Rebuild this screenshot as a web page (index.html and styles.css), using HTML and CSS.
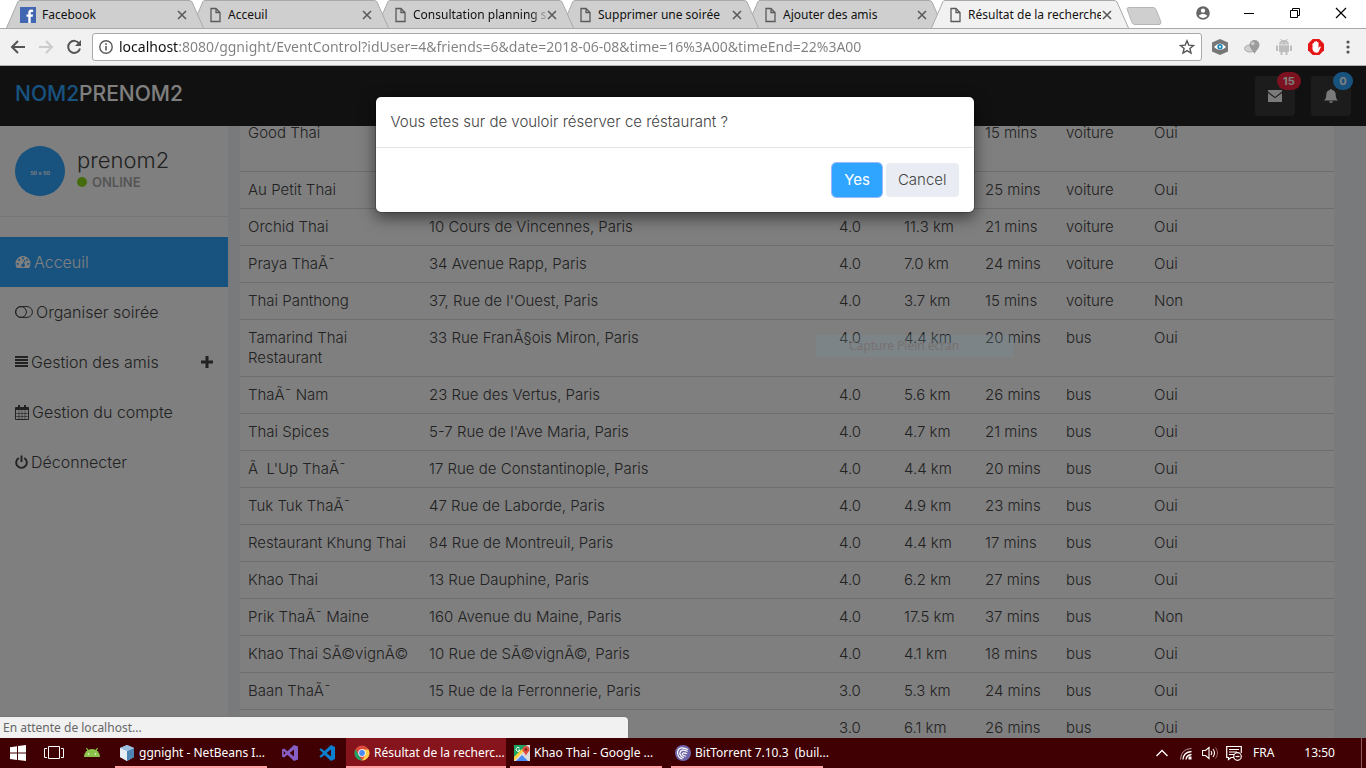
FILE: index.html
```html
<!DOCTYPE html>
<html lang="fr">
<head>
<meta charset="utf-8">
<title>Résultat de la recherche</title>
<link rel="stylesheet" href="styles.css">
</head>
<body>
<svg class="defs" aria-hidden="true">
  <symbol id="page" viewBox="0 0 12 16"><path d="M1.5 1.5h5l4 4v9h-9zM6.500 1.500v4h4" fill="none" stroke="#5a5a5a" stroke-width="1.300"/></symbol>
  <symbol id="cross" viewBox="0 0 10 10"><path d="M1 1l8 8M9 1l-8 8" stroke="#5a5a5a" stroke-width="1.600"/></symbol>
  <symbol id="shape" viewBox="0 0 198 28" preserveAspectRatio="none"><path d="M.5 28L12 1.500Q12.500.5 14 .5H183Q185 .5 186 2L197.500 28" stroke="#a9a9a9"/></symbol>
</svg>

<header class="tabs">
  <div class="tab t1"><svg class="tab-bg"><use href="#shape"/></svg>
    <svg class="fb" viewBox="0 0 16 16"><path fill="#4267b2" d="M0 0h16v16H0z"/><path fill="#fff" d="M8.300 16V9.800H6.500V7.400h1.800V5.800c0-2 1.200-3.200 3.100-3.200l1.700.1v2.200h-1.200c-1 0-1.200.5-1.200 1.200v1.300H13l-.3 2.400h-2V16z"/></svg>
    <span class="tab-title">Facebook</span><button class="tab-close" aria-label="Fermer"><svg><use href="#cross"/></svg></button></div>
  <div class="tab t2"><svg class="tab-bg"><use href="#shape"/></svg><svg class="page"><use href="#page"/></svg>
    <span class="tab-title">Acceuil</span><button class="tab-close" aria-label="Fermer"><svg><use href="#cross"/></svg></button></div>
  <div class="tab t3"><svg class="tab-bg"><use href="#shape"/></svg><svg class="page"><use href="#page"/></svg>
    <span class="tab-title fade">Consultation planning s</span><button class="tab-close" aria-label="Fermer"><svg><use href="#cross"/></svg></button></div>
  <div class="tab t4"><svg class="tab-bg"><use href="#shape"/></svg><svg class="page"><use href="#page"/></svg>
    <span class="tab-title">Supprimer une soirée</span><button class="tab-close" aria-label="Fermer"><svg><use href="#cross"/></svg></button></div>
  <div class="tab t5"><svg class="tab-bg"><use href="#shape"/></svg><svg class="page"><use href="#page"/></svg>
    <span class="tab-title">Ajouter des amis</span><button class="tab-close" aria-label="Fermer"><svg><use href="#cross"/></svg></button></div>
  <div class="tab active"><svg class="tab-bg"><use href="#shape"/></svg><svg class="page"><use href="#page"/></svg>
    <span class="tab-title">Résultat de la recherche</span><button class="tab-close" aria-label="Fermer"><svg><use href="#cross"/></svg></button></div>
  <button class="new-tab" aria-label="Nouvel onglet"><svg viewBox="0 0 36 18"><path d="M1 2Q1 .5 3 .5H27Q29 .5 30 2.500L35 15Q35 17.500 33 17.500H9Q7 17.500 6 15.500Z" fill="#cfcfcf" stroke="#b5b5b5"/></svg></button>
  <div class="window-controls">
    <button aria-label="Profil"><svg viewBox="0 0 14 14"><path fill="#666" fill-rule="evenodd" d="M7 .2a6.800 6.800 0 100 13.600A6.800 6.800 0 007 .2zm0 2.200a2.200 2.200 0 110 4.400 2.200 2.200 0 010-4.400zM2.800 9.700C3.500 8.500 5.500 8 7 8s3.500.5 4.200 1.700C10.300 11 8.700 11.900 7 11.900s-3.300-.9-4.200-2.200z"/></svg></button>
    <button aria-label="Réduire"><svg viewBox="0 0 14 14"><path d="M2 7.500h10" stroke="#000"/></svg></button>
    <button aria-label="Restaurer"><svg viewBox="0 0 14 14"><path d="M2.500 4.500h7v7h-7zM4.500 4.500v-2h7v7h-2" fill="none" stroke="#000"/></svg></button>
    <button aria-label="Fermer"><svg viewBox="0 0 14 14"><path d="M2 2l10 10M12 2L2 12" stroke="#000" stroke-width="1.200"/></svg></button>
  </div>
</header>

<div class="toolbar">
  <button class="nav-btn" aria-label="Précédent"><svg viewBox="0 0 16 16"><path d="M15 8H2.500M8 2L2 8l6 6" fill="none" stroke="#555" stroke-width="2"/></svg></button>
  <button class="nav-btn" aria-label="Suivant"><svg viewBox="0 0 16 16"><path d="M1 8h12.500M8 2l6 6-6 6" fill="none" stroke="#ccc" stroke-width="2"/></svg></button>
  <button class="nav-btn" aria-label="Recharger"><svg viewBox="0 0 16 16"><path d="M13.200 4.500A6 6 0 1014 9.500" fill="none" stroke="#555" stroke-width="2"/><path d="M15 1v6H9z" fill="#555"/></svg></button>
  <div class="address">
    <svg class="info" viewBox="0 0 14 14"><circle cx="7" cy="7" r="6.200" fill="none" stroke="#5a5a5a" stroke-width="1.400"/><path d="M7 6v4.500M7 3.300v1.600" stroke="#5a5a5a" stroke-width="1.600"/></svg>
    <input type="text" aria-label="Adresse" value="localhost:8080/ggnight/EventControl?idUser=4&amp;friends=6&amp;date=2018-06-08&amp;time=16%3A00&amp;timeEnd=22%3A00">
    <button class="star" aria-label="Favori"><svg viewBox="0 0 16 16"><path d="M8 1.800l1.800 4.300 4.700.4-3.600 3 1.100 4.600L8 11.600 4 14.100l1.100-4.600-3.600-3 4.700-.4z" fill="none" stroke="#555" stroke-width="1.400"/></svg></button>
  </div>
  <button class="ext" aria-label="Extension œil"><svg viewBox="0 0 16 16"><path d="M8 0l8 3.500v9L8 16l-8-3.500v-9z" fill="#777"/><path d="M2 8q6-7 12 0-6 6-12 0z" fill="#fff"/><circle cx="8" cy="7.800" r="2.700" fill="#1e88b5"/><circle cx="8" cy="7.800" r="1" fill="#fff"/></svg></button>
  <button class="ext" aria-label="Extension ballon"><svg viewBox="0 0 16 16"><ellipse cx="6" cy="9.500" rx="5.500" ry="3.500" fill="#d0d0d0" stroke="#aaa"/><path d="M10.500 1a5 5 0 015 5c0 3-3 5-5 9C8.500 11 5.500 9 5.500 6a5 5 0 015-5z" fill="#9c9c9c"/><circle cx="8.800" cy="4.500" r="1.800" fill="#ccc"/></svg></button>
  <button class="ext" aria-label="Extension Android"><svg viewBox="0 0 16 16" fill="#bdbdbd"><path d="M3 5.500a5 4.500 0 0110 0zM3 6.300h10V13H3zM0 6.500h2V12H0zM14 6.500h2V12h-2zM4.500 13h2v3h-2zM9.500 13h2v3h-2z"/><path d="M4.500 0l1.500 2M11.500 0L10 2" stroke="#bdbdbd"/><path d="M5.500 3.500h1v1h-1zM9.500 3.500h1v1h-1z" fill="#fff"/></svg></button>
  <button class="ext" aria-label="Bloqueur"><svg viewBox="0 0 16 16"><path d="M4.700 0h6.600L16 4.700v6.600L11.300 16H4.700L0 11.300V4.700z" fill="#e51616"/><path d="M4.500 8V4.500q.8-.8 1.500 0V3q.8-.9 1.500 0v-.6q.8-.9 1.500 0V3.300q.8-.7 1.500.1V9l1.300-1.500q1.200-.3 1 .8L10.500 13q-1.500 1.200-4 .3Q4.500 12 4.500 10z" fill="#fff"/></svg></button>
  <button class="ext" aria-label="Menu"><svg viewBox="0 0 16 16" fill="#555"><circle cx="8" cy="3" r="1.600"/><circle cx="8" cy="8" r="1.600"/><circle cx="8" cy="13" r="1.600"/></svg></button>
</div>

<div class="viewport">
  <nav class="navbar">
    <a class="brand" href="#"><span>NOM2</span>PRENOM2</a>
    <div class="alerts">
      <button class="alert-btn" aria-label="Messages"><svg viewBox="0 0 16 14"><path fill="#f4f4f4" d="M1 1h14v1.500L8 8 1 2.500zM1 4l7 5.200L15 4v9H1z"/></svg><span class="badge red">15</span></button>
      <button class="alert-btn" aria-label="Notifications"><svg viewBox="0 0 16 16"><path fill="#f4f4f4" d="M8 1c.7 0 1 .5 1 1 2.500.5 3.700 2.300 3.700 4.500 0 3.500.8 4.500 2.300 6H1c1.500-1.500 2.300-2.500 2.300-6C3.300 4.300 4.500 2.500 7 2c0-.5.300-1 1-1zM6.200 13.300h3.600a1.800 1.800 0 01-3.600 0z"/></svg><span class="badge blue">0</span></button>
    </div>
  </nav>
  <div class="content">
    <aside class="sidebar">
      <div class="profile">
        <div class="avatar">50 x 50</div>
        <div><div class="user">prenom2</div><div class="status"><i></i>ONLINE</div></div>
      </div>
      <ul class="menu">
        <li><a class="current" href="#"><svg class="w16" viewBox="0 0 16 14"><path fill="currentColor" fill-rule="evenodd" d="M8 1a7.500 7.500 0 017.500 7.500c0 1.600-.5 3-1.200 4.500H1.700C1 11.500.5 10 .5 8.500A7.500 7.500 0 018 1zM7.100 2.300v2h1.800v-2zM3.300 4v1.800h1.800V4zm7.700 0v1.800h1.800V4zM1.800 8v1.800h1.800V8zm10.600 0v1.800h1.800V8zM9.200 4.800L8.100 8.500a1.800 1.800 0 101 .3l1.100-3.700z"/></svg>Acceuil</a></li>
        <li><a href="#"><svg class="w18" viewBox="0 0 18 12"><rect x=".6" y=".6" width="16.800" height="10.800" rx="5.400" fill="none" stroke="currentColor"/><circle cx="6" cy="6" r="5.400" fill="none" stroke="currentColor"/></svg>Organiser soirée</a></li>
        <li><a href="#"><svg class="w13" viewBox="0 0 13 14"><path d="M0 1h13v2H0zM0 4h13v2H0zM0 7h13v2H0zM0 10h13v2H0z" fill="currentColor"/></svg>Gestion des amis<svg class="plus" viewBox="0 0 12 12"><path d="M6 0v12M0 6h12" stroke="currentColor" stroke-width="3"/></svg></a></li>
        <li><a href="#"><svg class="w14" viewBox="0 0 14 15"><path d="M.5 2.500h13v12H.5z" fill="none" stroke="currentColor"/><path d="M.5 8.500h13M.5 11.500h13M4 5.500v9M7 5.500v9M10 5.500v9" fill="none" stroke="currentColor" stroke-width=".6"/><path d="M.5 2.500h13V5H.5zM3 0h2v4H3zM9 0h2v4H9z" fill="currentColor"/></svg>Gestion du compte</a></li>
        <li><a href="#"><svg class="w13" viewBox="0 0 13 14"><path d="M3.800 3A5.300 5.300 0 109.200 3M6.500.5v6.500" fill="none" stroke="currentColor" stroke-width="1.900"/></svg>Déconnecter</a></li>
      </ul>
    </aside>
    <main class="results">
      <table>
        <colgroup><col class="c-name"><col class="c-addr"><col class="c-note"><col class="c-dist"><col class="c-time"><col class="c-mode"><col></colgroup>
        <tbody>
        <tr class="tall"><td>Good Thai</td><td></td><td></td><td></td><td>15 mins</td><td>voiture</td><td>Oui</td></tr>
        <tr><td>Au Petit Thai</td><td></td><td></td><td></td><td>25 mins</td><td>voiture</td><td>Oui</td></tr>
        <tr><td>Orchid Thai</td><td>10 Cours de Vincennes, Paris</td><td>4.0</td><td>11.3 km</td><td>21 mins</td><td>voiture</td><td>Oui</td></tr>
        <tr><td>Praya ThaÃ¯</td><td>34 Avenue Rapp, Paris</td><td>4.0</td><td>7.0 km</td><td>24 mins</td><td>voiture</td><td>Oui</td></tr>
        <tr><td>Thai Panthong</td><td>37, Rue de l'Ouest, Paris</td><td>4.0</td><td>3.7 km</td><td>15 mins</td><td>voiture</td><td>Non</td></tr>
        <tr><td>Tamarind Thai Restaurant</td><td>33 Rue FranÃ§ois Miron, Paris</td><td>4.0</td><td>4.4 km</td><td>20 mins</td><td>bus</td><td>Oui</td></tr>
        <tr><td>ThaÃ¯ Nam</td><td>23 Rue des Vertus, Paris</td><td>4.0</td><td>5.6 km</td><td>26 mins</td><td>bus</td><td>Oui</td></tr>
        <tr><td>Thai Spices</td><td>5-7 Rue de l'Ave Maria, Paris</td><td>4.0</td><td>4.7 km</td><td>21 mins</td><td>bus</td><td>Oui</td></tr>
        <tr><td>Ã&nbsp; L'Up ThaÃ¯</td><td>17 Rue de Constantinople, Paris</td><td>4.0</td><td>4.4 km</td><td>20 mins</td><td>bus</td><td>Oui</td></tr>
        <tr><td>Tuk Tuk ThaÃ¯</td><td>47 Rue de Laborde, Paris</td><td>4.0</td><td>4.9 km</td><td>23 mins</td><td>bus</td><td>Oui</td></tr>
        <tr><td>Restaurant Khung Thai</td><td>84 Rue de Montreuil, Paris</td><td>4.0</td><td>4.4 km</td><td>17 mins</td><td>bus</td><td>Oui</td></tr>
        <tr><td>Khao Thai</td><td>13 Rue Dauphine, Paris</td><td>4.0</td><td>6.2 km</td><td>27 mins</td><td>bus</td><td>Oui</td></tr>
        <tr><td>Prik ThaÃ¯ Maine</td><td>160 Avenue du Maine, Paris</td><td>4.0</td><td>17.5 km</td><td>37 mins</td><td>bus</td><td>Non</td></tr>
        <tr><td>Khao Thai SÃ©vignÃ©</td><td>10 Rue de SÃ©vignÃ©, Paris</td><td>4.0</td><td>4.1 km</td><td>18 mins</td><td>bus</td><td>Oui</td></tr>
        <tr><td>Baan ThaÃ¯</td><td>15 Rue de la Ferronnerie, Paris</td><td>3.0</td><td>5.3 km</td><td>24 mins</td><td>bus</td><td>Oui</td></tr>
        <tr><td></td><td></td><td>3.0</td><td>6.1 km</td><td>26 mins</td><td>bus</td><td>Oui</td></tr>
        </tbody>
      </table>
    </main>
  </div>
  <div class="backdrop">
    <div class="modal" role="dialog" aria-labelledby="question">
      <div class="modal-head" id="question">Vous etes sur de vouloir réserver ce réstaurant ?</div>
      <div class="modal-foot"><button class="btn yes">Yes</button><button class="btn cancel">Cancel</button></div>
    </div>
  </div>
  <div class="ghost">Capture Plein écran</div>
  <div class="loading">En attente de localhost...</div>
</div>

<footer class="taskbar">
  <button class="launch" aria-label="Démarrer"><svg viewBox="0 0 16 16"><path fill="#fff" d="M0 2.300L7 1.200v6.400H0zM8 1l8-1v7.600H8zM0 8.500h7v6.400l-7-1zM8 8.500h8V16l-8-1z"/></svg></button>
  <button class="launch" aria-label="Vue des tâches"><svg class="w20" viewBox="0 0 20 16"><path d="M4.500 1.500h11v12h-11zM3 3.500H.5v9H3M17 3.500h2.500v9H17" fill="none" stroke="#fff"/></svg></button>
  <button class="launch android" aria-label="Android"><svg viewBox="0 0 16 16"><path d="M0 12a8 8 0 0116 0z" fill="#8bc34a"/><path d="M2.500 3l2 3.500M13.500 3l-2 3.500" stroke="#8bc34a" stroke-width="1.200"/><circle cx="4.500" cy="9" r=".8" fill="#fff"/><circle cx="11.500" cy="9" r=".8" fill="#fff"/></svg></button>
  <button class="task"><svg viewBox="0 0 16 16"><path d="M8 0l7 3v9l-7 4-7-4V3z" fill="#bcd4e8"/><path d="M8 6l7-3v9l-7 4z" fill="#4d86b5"/><path d="M8 6L1 3v9l7 4z" fill="#e5eef5"/><path d="M8 0l7 3-7 3-7-3z" fill="#9cbfdd"/></svg><span>ggnight - NetBeans I...</span></button>
  <button class="launch vs" aria-label="Visual Studio"><svg viewBox="0 0 16 16"><path fill="#865fc5" fill-rule="evenodd" d="M12 0l4 1.500v13L12 16 5.500 9.800 2 12.500l-2-1v-7l2-1 3.500 2.700zM12 4.500L7.700 8l4.300 3.500zM1.700 6v4l2-2z"/></svg></button>
  <button class="launch code" aria-label="VS Code"><svg viewBox="0 0 16 16"><path fill="#0b80d0" fill-rule="evenodd" d="M12 0l4 2v12l-4 2-6.500-6L2 12.700.3 11.500 4 8 .3 4.500 2 3.300 5.500 6zM12 4.500L7.600 8l4.400 3.500z"/></svg></button>
  <button class="task current-task"><svg viewBox="0 0 16 16"><circle cx="8" cy="8" r="7.500" fill="#dd4b3e"/><path d="M1.500 4.300L5 10.500l3 5A7.500 7.500 0 011.500 4.300z" fill="#1da462"/><path d="M8 4.500h6.600A7.500 7.500 0 018 15.500l3.200-5.500z" fill="#ffcd46"/><circle cx="8" cy="8" r="3.800" fill="#fff"/><circle cx="8" cy="8" r="2.900" fill="#4a8af4"/></svg><span>Résultat de la recherc...</span></button>
  <button class="task maps"><svg viewBox="0 0 16 16"><path fill="#1da462" d="M0 0h16v16H0z"/><path fill="#ddd" d="M0 13L13 0h3v16H0z"/><path fill="#ffcf3e" d="M0 12l8-8 2 2-10 10z"/><path fill="#4a8af4" d="M2 16l6-6 6 6z"/><path d="M12 1a3.500 3.500 0 013.500 3.500C15.500 7 12.700 8 12 11c-.7-3-3.500-4-3.500-6.500A3.500 3.500 0 0112 1z" fill="#dd4b3e"/><circle cx="12" cy="4.500" r="1.200" fill="#70231c"/><path d="M5.500 3A2 2 0 106 5H4.300" fill="none" stroke="#fff"/></svg><span>Khao Thai - Google ...</span></button>
  <button class="task torrent"><svg viewBox="0 0 16 16"><circle cx="8" cy="8" r="8" fill="#7064a8"/><path d="M13 4.500Q3 0 2.500 8q.5 5 5 6M12.500 6.500Q5 3 4.800 9q1 3 4 3.700M12 8.800Q7.500 6.500 7.300 9.500q1 1.500 3.500 1.700" fill="none" stroke="#fff" stroke-width="1.200"/></svg><span>BitTorrent 7.10.3&nbsp; (buil...</span></button>
  <div class="tray">
    <svg viewBox="0 0 16 16"><path d="M2.500 11L8 5.500l5.500 5.500" fill="none" stroke="#fff" stroke-width="1.300"/></svg>
    <svg viewBox="0 0 16 16"><g fill="none" stroke="#fff"><path d="M2.500 14.500Q3 4 13.500 3.500" stroke="#b99"/><path d="M5 14.500Q5.500 7 13.500 6.500M8 14.500Q8.500 10 13.500 9.500" stroke-width="1.300"/></g><path d="M10.500 11.500h3v3h-3z" fill="#fff"/></svg>
    <svg viewBox="0 0 16 16"><path d="M.5 5.500h3l3.500-3v11l-3.500-3h-3zM9 6q1.500 2 0 4M11 4q3 4 0 8" fill="none" stroke="#fff" stroke-width="1.100"/><path d="M13.500 2.500q4 5.500 0 11" fill="none" stroke="#966"/></svg>
    <svg viewBox="0 0 16 16"><path d="M8 12.500H5l-2.500 2v-2H.7v-11h14.600V8M3 4.500h10M3 7h8M3 9.500h5" fill="none" stroke="#fff" stroke-width="1.200"/><circle cx="11.500" cy="11.500" r="3.800" fill="#400003" stroke="#fff" stroke-width="1.200"/><path d="M9.500 11.500h4" stroke="#fff" stroke-width="1.200"/></svg>
    <span class="lang">FRA</span>
    <span class="clock">13:50</span>
  </div>
</footer>
</body>
</html>
```
FILE: styles.css
```css
* { box-sizing: border-box; }
body {
  margin: 0;
  height: 100vh;
  display: flex;
  flex-direction: column;
  overflow: hidden;
  font: 300 15px/20px Inter, "Open Sans", sans-serif;
  color: #444;
}
button { margin: 0; padding: 0; border: 0; background: none; font: inherit; color: inherit; }
a { color: inherit; text-decoration: none; }
svg { display: block; flex: none; }
.defs { position: absolute; width: 0; height: 0; }

/* Browser tabs */
.tabs {
  flex: none;
  height: 28px;
  padding-left: 6px;
  display: flex;
  background: #fff;
  font: 400 12px/16px "Noto Sans", "Open Sans", sans-serif;
  color: #111;
}
.tab {
  position: relative;
  width: 198px;
  height: 28px;
  margin-right: -13px;
  padding: 2px 17px 0 18px;
  display: flex;
  align-items: center;
}
.t1 { z-index: 5; padding-left: 14px; }
.t2 { z-index: 4; }
.t3 { z-index: 3; }
.t4 { z-index: 2; }
.t5 { z-index: 1; }
.tab.active { z-index: 6; }
.tab-bg { position: absolute; inset: 0; z-index: -1; width: 100%; height: 100%; fill: #cfcfcf; }
.active .tab-bg { fill: #f1f1f1; }
.page { width: 13px; height: 16px; }
.fb { width: 16px; height: 16px; }
.tab-title { flex: 1; min-width: 0; margin: 0 1px 0 6px; overflow: hidden; white-space: nowrap; }
.fade { -webkit-mask-image: linear-gradient(90deg, #000 88%, #0003); mask-image: linear-gradient(90deg, #000 88%, #0003); }
.tab-close svg { width: 10px; height: 10px; }
.new-tab { margin: 7px 0 0 10px; align-self: flex-start; }
.new-tab svg { width: 36px; height: 18px; }
.window-controls { margin: 0 2px 0 auto; display: flex; height: 26px; }
.window-controls button { width: 46px; display: flex; align-items: center; justify-content: center; }
.window-controls svg { width: 14px; height: 14px; }

/* Browser toolbar */
.toolbar {
  flex: none;
  height: 38px;
  padding: 0 2px 0 4px;
  display: flex;
  align-items: center;
  background: #f1f1f1;
  border-top: 1px solid #a9a9a9;
  border-bottom: 1px solid #b0b0b0;
}
.nav-btn { width: 28px; display: flex; justify-content: center; }
.nav-btn svg { width: 16px; height: 16px; }
.address {
  flex: 1;
  height: 28px;
  margin: 0 2px 0 4px;
  padding: 0 6px;
  display: flex;
  align-items: center;
  gap: 6px;
  background: #fff;
  border: 1px solid #a9a9a9;
  border-radius: 3px;
}
.info { width: 14px; height: 14px; }
.address input {
  flex: 1;
  min-width: 0;
  padding: 0;
  border: 0;
  outline: 0;
  font: 400 14px/20px "Noto Sans", "Open Sans", sans-serif;
  color: transparent;
  background: linear-gradient(90deg, #111 60px, #808080 60px);
  -webkit-background-clip: text;
  background-clip: text;
}
.star svg { width: 16px; height: 16px; }
.ext { width: 32px; display: flex; justify-content: center; }
.ext svg { width: 16px; height: 16px; }

/* Site */
.viewport { position: relative; flex: 1; min-height: 0; display: flex; flex-direction: column; overflow: hidden; }
.navbar {
  position: relative;
  z-index: 1;
  flex: none;
  height: 60px;
  padding: 0 15px;
  display: flex;
  justify-content: space-between;
  background: #222;
}
.brand { padding-top: 18px; font-size: 21px; font-weight: 500; color: #fff; }
.brand span { color: #30a5ff; }
.alerts { display: flex; gap: 16px; padding-top: 10px; }
.alert-btn {
  position: relative;
  width: 40px;
  height: 40px;
  display: flex;
  align-items: center;
  justify-content: center;
  border-radius: 4px;
  background: #393939;
}
.alert-btn svg { width: 16px; height: 16px; }
.badge {
  position: absolute;
  top: -4px;
  left: 22px;
  min-width: 20px;
  padding: 0 6px;
  border-radius: 9px;
  font-size: 11px;
  line-height: 18px;
  font-weight: 700;
  color: #fff;
}
.red { background: #f9243f; }
.blue { background: #30a5ff; }
.content { flex: 1; min-height: 0; display: flex; }
.sidebar { flex: none; width: 228px; background: #fff; }
.profile { display: flex; gap: 12px; height: 91px; padding: 20px 15px 0; border-bottom: 1px solid #e9ecf2; }
.avatar {
  width: 50px;
  height: 50px;
  border-radius: 50%;
  background: #30a5ff;
  color: #fff;
  font: 500 6px/53px Roboto, sans-serif;
  text-align: center;
}
.user { padding-top: 2px; font-size: 22px; line-height: 24px; }
.status { display: flex; align-items: center; gap: 5px; font-size: 13px; font-weight: 600; color: #aaa; }
.status i { width: 10px; height: 10px; border-radius: 50%; background: #8ad919; }
.menu { margin: 20px 0 0; padding: 0; list-style: none; font-size: 16px; }
.menu a { display: flex; align-items: center; height: 50px; padding: 0 15px; gap: 3px; }
.menu .current { background: #30a5ff; color: #fff; }
.w13 { width: 13px; height: 14px; }
.w14 { width: 14px; height: 15px; }
.w16 { width: 16px; height: 14px; }
.w18 { width: 18px; height: 12px; }
.plus { width: 12px; height: 12px; margin-left: auto; }
.results { flex: 1; min-width: 0; overflow: hidden; padding: 0 32px 0 12px; background: #f1f4f7; }
.results table { width: 100%; margin-top: -12px; table-layout: fixed; border-collapse: separate; border-spacing: 0; background: #fff; }
.results td { padding: 8px; vertical-align: top; border-top: 1px solid #ddd; height: 37px; }
.results .tall td { height: 57px; }
.c-name { width: 181px; }
.c-note { width: 65px; }
.c-dist, .c-time { width: 81px; }
.c-mode { width: 88px; }
.results col:last-child { width: 188px; }

/* Confirmation dialog */
.backdrop { position: absolute; inset: 0; z-index: 2; padding: 30px 17px 0 0; background: rgba(0, 0, 0, .5); }
.modal {
  width: 600px;
  margin: 0 auto;
  background: #fff;
  background-clip: padding-box;
  border: 1px solid rgba(0, 0, 0, .2);
  border-radius: 6px;
  box-shadow: 0 5px 15px rgba(0, 0, 0, .5);
}
.modal-head { padding: 15px; border-bottom: 1px solid #e5e5e5; }
.modal-foot { display: flex; justify-content: flex-end; gap: 4px; padding: 15px; }
.btn { height: 34px; padding: 0 12px; border-radius: 4px; }
.yes { background: #30a5ff; color: #fff; font-weight: 400; outline: 1px solid #9cb9ff; }
.cancel { background: #e9ecf2; }

.ghost {
  position: absolute;
  z-index: 2;
  top: 269px;
  right: 352px;
  width: 198px;
  padding-left: 33px;
  font: 400 12px/22px "Noto Sans", sans-serif;
  color: #77706f;
  background: rgba(116, 146, 160, .25);
}
.loading {
  position: absolute;
  z-index: 3;
  left: 0;
  bottom: 0;
  width: 46%;
  padding: 0 3px;
  border-radius: 0 4px 0 0;
  background: #f1f1f1;
  box-shadow: 0 0 1px 1px #777;
  font: 400 12px/21px "Noto Sans", sans-serif;
  color: #666;
}

/* Taskbar */
.taskbar {
  position: relative;
  z-index: 4;
  flex: none;
  height: 30px;
  display: flex;
  background: #400003;
  color: #fff;
  font: 400 12px/16px "Noto Sans", "Open Sans", sans-serif;
}
.launch { width: 36px; display: flex; align-items: center; justify-content: center; }
.launch svg, .task svg, .tray svg { width: 16px; height: 16px; }
.launch .w20 { width: 20px; }
.android { width: 43px; padding-right: 4px; }
.vs { width: 46px; }
.code { width: 33px; padding-right: 5px; }
.task { width: 152px; display: flex; align-items: center; gap: 4px; padding: 2px 0 0 4px; border-bottom: 2px solid #ffa0a5; white-space: nowrap; }
.current-task { width: 160px; padding-left: 8px; background: #86141c; }
.maps { margin-left: 4px; }
.torrent { margin-left: 9px; }
.tray { margin-left: auto; margin-right: 4px; padding-right: 26px; display: flex; align-items: center; gap: 8px; border-right: 1px solid #8a5c5e; }
.lang { margin-left: 3px; }
.clock { margin-left: 22px; }
```
